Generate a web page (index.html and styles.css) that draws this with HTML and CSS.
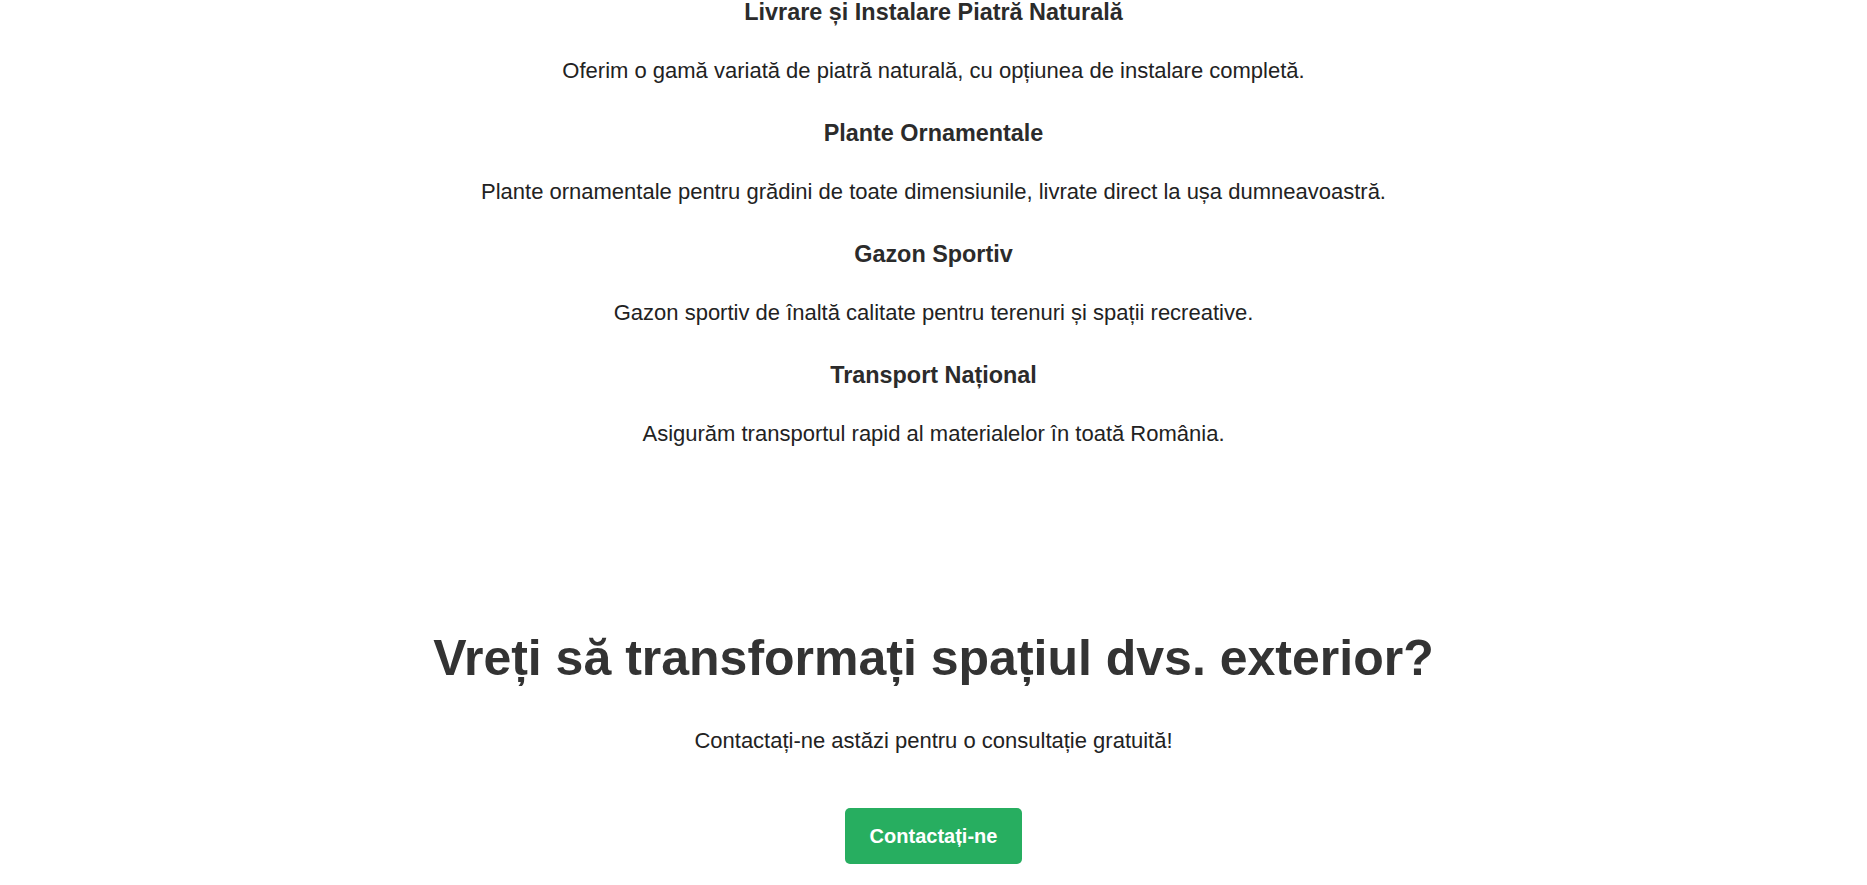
FILE: index.html
```html
<!DOCTYPE html>
<html lang="ro">
<head>
<meta charset="utf-8">
<title>Servicii</title>
<link rel="stylesheet" href="styles.css">
</head>
<body>
<section class="services">
  <div class="service">
    <h3 class="service-title">Livrare și Instalare Piatră Naturală</h3>
    <p class="service-text">Oferim o gamă variată de piatră naturală, cu opțiunea de instalare completă.</p>
  </div>
  <div class="service">
    <h3 class="service-title">Plante Ornamentale</h3>
    <p class="service-text">Plante ornamentale pentru grădini de toate dimensiunile, livrate direct la ușa dumneavoastră.</p>
  </div>
  <div class="service">
    <h3 class="service-title">Gazon Sportiv</h3>
    <p class="service-text">Gazon sportiv de înaltă calitate pentru terenuri și spații recreative.</p>
  </div>
  <div class="service">
    <h3 class="service-title">Transport Național</h3>
    <p class="service-text">Asigurăm transportul rapid al materialelor în toată România.</p>
  </div>
</section>
<section class="cta">
  <h2 class="cta-title">Vreți să transformați spațiul dvs. exterior?</h2>
  <p class="cta-text">Contactați-ne astăzi pentru o consultație gratuită!</p>
  <a class="cta-button" href="#contact">Contactați-ne</a>
</section>
</body>
</html>
```
FILE: styles.css
```css
html, body {
  margin: 0;
  padding: 0;
  background: #ffffff;
}

body {
  font-family: "Liberation Sans", Arial, sans-serif;
  font-size: 20px;
  line-height: 1.6;
  color: #333333;
  text-align: center;
}

.services {
  margin-top: -6px;
  padding-bottom: 90px;
}

.service-title {
  margin: 0 0 22px;
  font-size: 23.4px;
  font-weight: bold;
  color: #2b2b2b;
}

.service-text {
  margin: 0 0 26.4px;
  font-size: 22px;
  color: #222222;
}

.service:last-child .service-text {
  margin-bottom: 0;
}

.cta {
  padding-top: 86px;
  padding-bottom: 40px;
}

.cta-title {
  margin: 0 0 35px;
  font-size: 50px;
  line-height: 1.2;
  font-weight: bold;
  color: #333333;
}

.cta-text {
  margin: 0 0 50px;
  font-size: 22px;
  color: #222222;
}

.cta-button {
  display: inline-block;
  padding: 12px 25px;
  background: #27ae60;
  color: #ffffff;
  font-weight: bold;
  text-decoration: none;
  border-radius: 5px;
}
```
